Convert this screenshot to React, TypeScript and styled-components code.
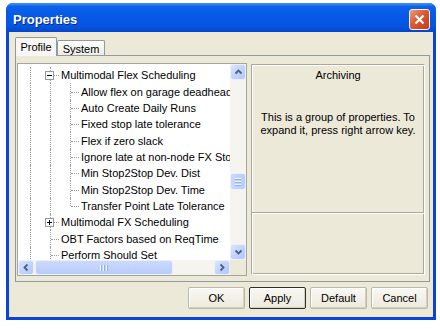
import styled, { createGlobalStyle } from "styled-components";

const GlobalStyle = createGlobalStyle`
  html, body {
    margin: 0;
    padding: 0;
    background: #ffffff;
  }
  body {
    font-family: "Liberation Sans", Arial, sans-serif;
    font-size: 11px;
    color: #000;
  }
`;

const Window = styled.div`
  width: 430px;
  height: 317px;
  margin: 3px 0 0 6px;
  background: #0a44d8;
  border-radius: 7px 7px 0 0;
  display: flex;
  flex-direction: column;
  overflow: hidden;
`;

const TitleBar = styled.div`
  height: 29px;
  flex-shrink: 0;
  box-sizing: border-box;
  display: flex;
  align-items: center;
  justify-content: space-between;
  padding: 4px 6px 0 7px;
  background: linear-gradient(
    #4a94f8 0%,
    #0c62ea 12%,
    #0559e6 45%,
    #0556e2 80%,
    #0646c9 100%
  );
`;

const Title = styled.div`
  color: #fff;
  font-size: 13px;
  font-weight: 700;
  text-shadow: 1px 1px 0 #0b2a8c;
`;

const CloseButton = styled.div`
  width: 21px;
  height: 21px;
  box-sizing: border-box;
  border: 1px solid #f4f4f4;
  border-radius: 3px;
  background: linear-gradient(135deg, #ef9a7a 0%, #dc5a32 45%, #c53c14 100%);
  display: flex;
  align-items: center;
  justify-content: center;
`;

const Body = styled.div`
  flex: 1;
  margin: 0 3px 3px;
  background: #ece9d8;
  display: flex;
  flex-direction: column;
`;

const TabStrip = styled.div`
  height: 23px;
  box-sizing: border-box;
  padding: 5px 0 0 6px;
  display: flex;
  align-items: flex-end;
`;

const Tab = styled.div<{ $active?: boolean; $w: number }>`
  width: ${(p) => p.$w}px;
  height: ${(p) => (p.$active ? 19 : 15)}px;
  box-sizing: border-box;
  border: 1px solid #919b9c;
  border-bottom: none;
  border-radius: 2px 2px 0 0;
  background: ${(p) =>
    p.$active ? "#f8f7f3" : "linear-gradient(#ffffff, #ecebe5)"};
  margin-bottom: ${(p) => (p.$active ? -1 : 0)}px;
  position: relative;
  z-index: ${(p) => (p.$active ? 1 : 0)};
  display: flex;
  align-items: center;
  justify-content: center;
  font-size: 11px;
  padding-top: ${(p) => (p.$active ? 0 : 1)}px;
`;

const TabPanel = styled.div`
  height: 227px;
  box-sizing: border-box;
  margin: 0 3px 0 6px;
  border: 1px solid #919b9c;
  background: #ece9d8;
  display: flex;
  padding: 7px 4px 5px 1px;
  gap: 4px;
`;

const TreeBox = styled.div`
  width: 230px;
  height: 213px;
  box-sizing: border-box;
  border: 1px solid #a5a5a0;
  background: #fff;
  display: grid;
  grid-template-columns: 212px 16px;
  grid-template-rows: 196px 15px;
`;

const TreeList = styled.div`
  overflow: hidden;
  padding: 3px 0 0 2px;
`;

const Row = styled.div`
  height: 16.35px;
  display: flex;
  align-items: stretch;
`;

type Line = "pass" | "tee" | "end" | "box";

const Cell = styled.span<{ $line: Line }>`
  position: relative;
  flex: 0 0 20px;
  &::before {
    content: "";
    position: absolute;
    left: 10px;
    top: 0;
    bottom: ${(p) => (p.$line === "end" ? "50%" : "0")};
    border-left: 1px dotted #9c9c9c;
  }
  &::after {
    content: "";
    position: absolute;
    left: 11px;
    right: 1px;
    top: 50%;
    border-top: 1px dotted #9c9c9c;
    display: ${(p) => (p.$line === "pass" ? "none" : "block")};
  }
`;

const Expander = styled.span`
  position: absolute;
  left: 5px;
  top: 50%;
  margin-top: -4px;
  width: 9px;
  height: 9px;
  box-sizing: border-box;
  border: 1px solid #919b9c;
  background: #fff;
  z-index: 1;
  display: flex;
  align-items: center;
  justify-content: center;
`;

const Label = styled.span`
  white-space: nowrap;
  line-height: 16px;
  padding-left: 1px;
  align-self: center;
`;

const VScroll = styled.div`
  display: flex;
  flex-direction: column;
  background: #f5f4ef;
`;

const HScroll = styled.div`
  display: flex;
  background: #f5f4ef;
`;

const Corner = styled.div`
  background: #ece9d8;
`;

const ScrollButton = styled.div`
  flex: 0 0 auto;
  width: 16px;
  height: 16px;
  box-sizing: border-box;
  border: 1px solid #eaf0fd;
  border-radius: 3px;
  background: linear-gradient(135deg, #dbe6fe 0%, #c1d4fc 50%, #b1c8f8 100%);
  display: flex;
  align-items: center;
  justify-content: center;
`;

const HButton = styled(ScrollButton)`
  height: 15px;
`;

const Track = styled.div<{ $vertical?: boolean; $offset: number }>`
  flex: 1;
  display: flex;
  flex-direction: ${(p) => (p.$vertical ? "column" : "row")};
  padding-${(p) => (p.$vertical ? "top" : "left")}: ${(p) => p.$offset}px;
`;

const Thumb = styled.div<{ $vertical?: boolean; $size: number }>`
  ${(p) => (p.$vertical ? "height" : "width")}: ${(p) => p.$size}px;
  box-sizing: border-box;
  border: 1px solid #eaf0fd;
  border-radius: 3px;
  background: ${(p) =>
    p.$vertical
      ? "linear-gradient(90deg, #c9d8fd, #b9cdfa)"
      : "linear-gradient(#cbd9fd, #b8ccfa)"};
  display: flex;
  flex-direction: ${(p) => (p.$vertical ? "column" : "row")};
  align-items: center;
  justify-content: center;
  gap: 1px;
`;

const Grip = styled.span<{ $vertical?: boolean }>`
  ${(p) =>
    p.$vertical
      ? "width: 6px; height: 1px; border-bottom: 1px solid #8eaef5;"
      : "width: 1px; height: 6px; border-right: 1px solid #8eaef5;"}
  background: #f4f7fe;
`;

const InfoPanel = styled.div`
  width: 174px;
  margin: 1px 0;
  box-sizing: border-box;
  border: 1px solid #aca899;
  border-right-color: #fff;
  border-bottom-color: #fff;
  box-shadow: inset 1px 1px 0 #fff, inset -1px -1px 0 #aca899;
  display: flex;
  flex-direction: column;
`;

const InfoTop = styled.div`
  height: 148px;
  box-sizing: border-box;
  padding: 4px 6px 0;
  border-bottom: 1px solid #aca899;
  text-align: center;
`;

const InfoBottom = styled.div`
  flex: 1;
  border-top: 1px solid #fff;
`;

const InfoTitle = styled.div`
  line-height: 13px;
`;

const InfoText = styled.div`
  margin-top: 29px;
  line-height: 13px;
`;

const Footer = styled.div`
  display: flex;
  justify-content: flex-end;
  gap: 4px;
  padding: 5px 5px 0 0;
`;

const Button = styled.div<{ $default?: boolean }>`
  width: 57px;
  height: 22px;
  box-sizing: border-box;
  border: 1px solid ${(p) => (p.$default ? "#2e2e2e" : "#bdb9a8")};
  border-radius: 2px;
  background: linear-gradient(#f9f8f3, #ece9dc);
  box-shadow: inset -1px -1px 0 #d4d0c0, inset 1px 1px 0 #ffffff;
  display: flex;
  align-items: center;
  justify-content: center;
  font-size: 11px;
`;

type Item = { cells: Line[]; label: string; expander?: "plus" | "minus" };

const items: Item[] = [
  { cells: ["pass", "box"], label: "Multimodal Flex Scheduling", expander: "minus" },
  { cells: ["pass", "pass", "tee"], label: "Allow flex on garage deadhead" },
  { cells: ["pass", "pass", "tee"], label: "Auto Create Daily Runs" },
  { cells: ["pass", "pass", "tee"], label: "Fixed stop late tolerance" },
  { cells: ["pass", "pass", "tee"], label: "Flex if zero slack" },
  { cells: ["pass", "pass", "tee"], label: "Ignore late at non-node FX Stops" },
  { cells: ["pass", "pass", "tee"], label: "Min Stop2Stop Dev. Dist" },
  { cells: ["pass", "pass", "tee"], label: "Min Stop2Stop Dev. Time" },
  { cells: ["pass", "pass", "end"], label: "Transfer Point Late Tolerance" },
  { cells: ["pass", "box"], label: "Multimodal FX Scheduling", expander: "plus" },
  { cells: ["pass", "tee"], label: "OBT Factors based on ReqTime" },
  { cells: ["pass", "tee"], label: "Perform Should Set" },
];

const Chevron = ({ dir }: { dir: "up" | "down" | "left" | "right" }) => {
  const d = {
    up: "M1.5 5.5 L4.5 2.5 L7.5 5.5",
    down: "M1.5 2.5 L4.5 5.5 L7.5 2.5",
    left: "M5.5 1.5 L2.5 4.5 L5.5 7.5",
    right: "M2.5 1.5 L5.5 4.5 L2.5 7.5",
  }[dir];
  return (
    <svg width="9" height="9" viewBox="0 0 9 9">
      <path d={d} fill="none" stroke="#4d6185" strokeWidth="1.8" />
    </svg>
  );
};

const ExpanderGlyph = ({ kind }: { kind: "plus" | "minus" }) => (
  <svg width="7" height="7" viewBox="0 0 7 7">
    <path d="M1 3.5 H6" stroke="#000" strokeWidth="1" />
    {kind === "plus" && <path d="M3.5 1 V6" stroke="#000" strokeWidth="1" />}
  </svg>
);

export default function App() {
  return (
    <>
      <GlobalStyle />
      <Window>
        <TitleBar>
          <Title>Properties</Title>
          <CloseButton>
            <svg width="11" height="11" viewBox="0 0 11 11">
              <path d="M1.5 1.5 L9.5 9.5 M9.5 1.5 L1.5 9.5" stroke="#fff" strokeWidth="2.2" />
            </svg>
          </CloseButton>
        </TitleBar>
        <Body>
          <TabStrip>
            <Tab $active $w={42}>Profile</Tab>
            <Tab $w={48}>System</Tab>
          </TabStrip>
          <TabPanel>
            <TreeBox>
              <TreeList>
                {items.map((item) => (
                  <Row key={item.label}>
                    {item.cells.map((line, i) => (
                      <Cell key={i} $line={line}>
                        {line === "box" && item.expander && (
                          <Expander>
                            <ExpanderGlyph kind={item.expander} />
                          </Expander>
                        )}
                      </Cell>
                    ))}
                    <Label>{item.label}</Label>
                  </Row>
                ))}
              </TreeList>
              <VScroll>
                <ScrollButton>
                  <Chevron dir="up" />
                </ScrollButton>
                <Track $vertical $offset={93}>
                  <Thumb $vertical $size={17}>
                    <Grip $vertical />
                    <Grip $vertical />
                    <Grip $vertical />
                  </Thumb>
                </Track>
                <ScrollButton>
                  <Chevron dir="down" />
                </ScrollButton>
              </VScroll>
              <HScroll>
                <HButton>
                  <Chevron dir="left" />
                </HButton>
                <Track $offset={1}>
                  <Thumb $size={138}>
                    <Grip />
                    <Grip />
                    <Grip />
                  </Thumb>
                </Track>
                <HButton>
                  <Chevron dir="right" />
                </HButton>
              </HScroll>
              <Corner />
            </TreeBox>
            <InfoPanel>
              <InfoTop>
                <InfoTitle>Archiving</InfoTitle>
                <InfoText>
                  This is a group of properties. To expand it, press right arrow key.
                </InfoText>
              </InfoTop>
              <InfoBottom />
            </InfoPanel>
          </TabPanel>
          <Footer>
            <Button>OK</Button>
            <Button $default>Apply</Button>
            <Button>Default</Button>
            <Button>Cancel</Button>
          </Footer>
        </Body>
      </Window>
    </>
  );
}
